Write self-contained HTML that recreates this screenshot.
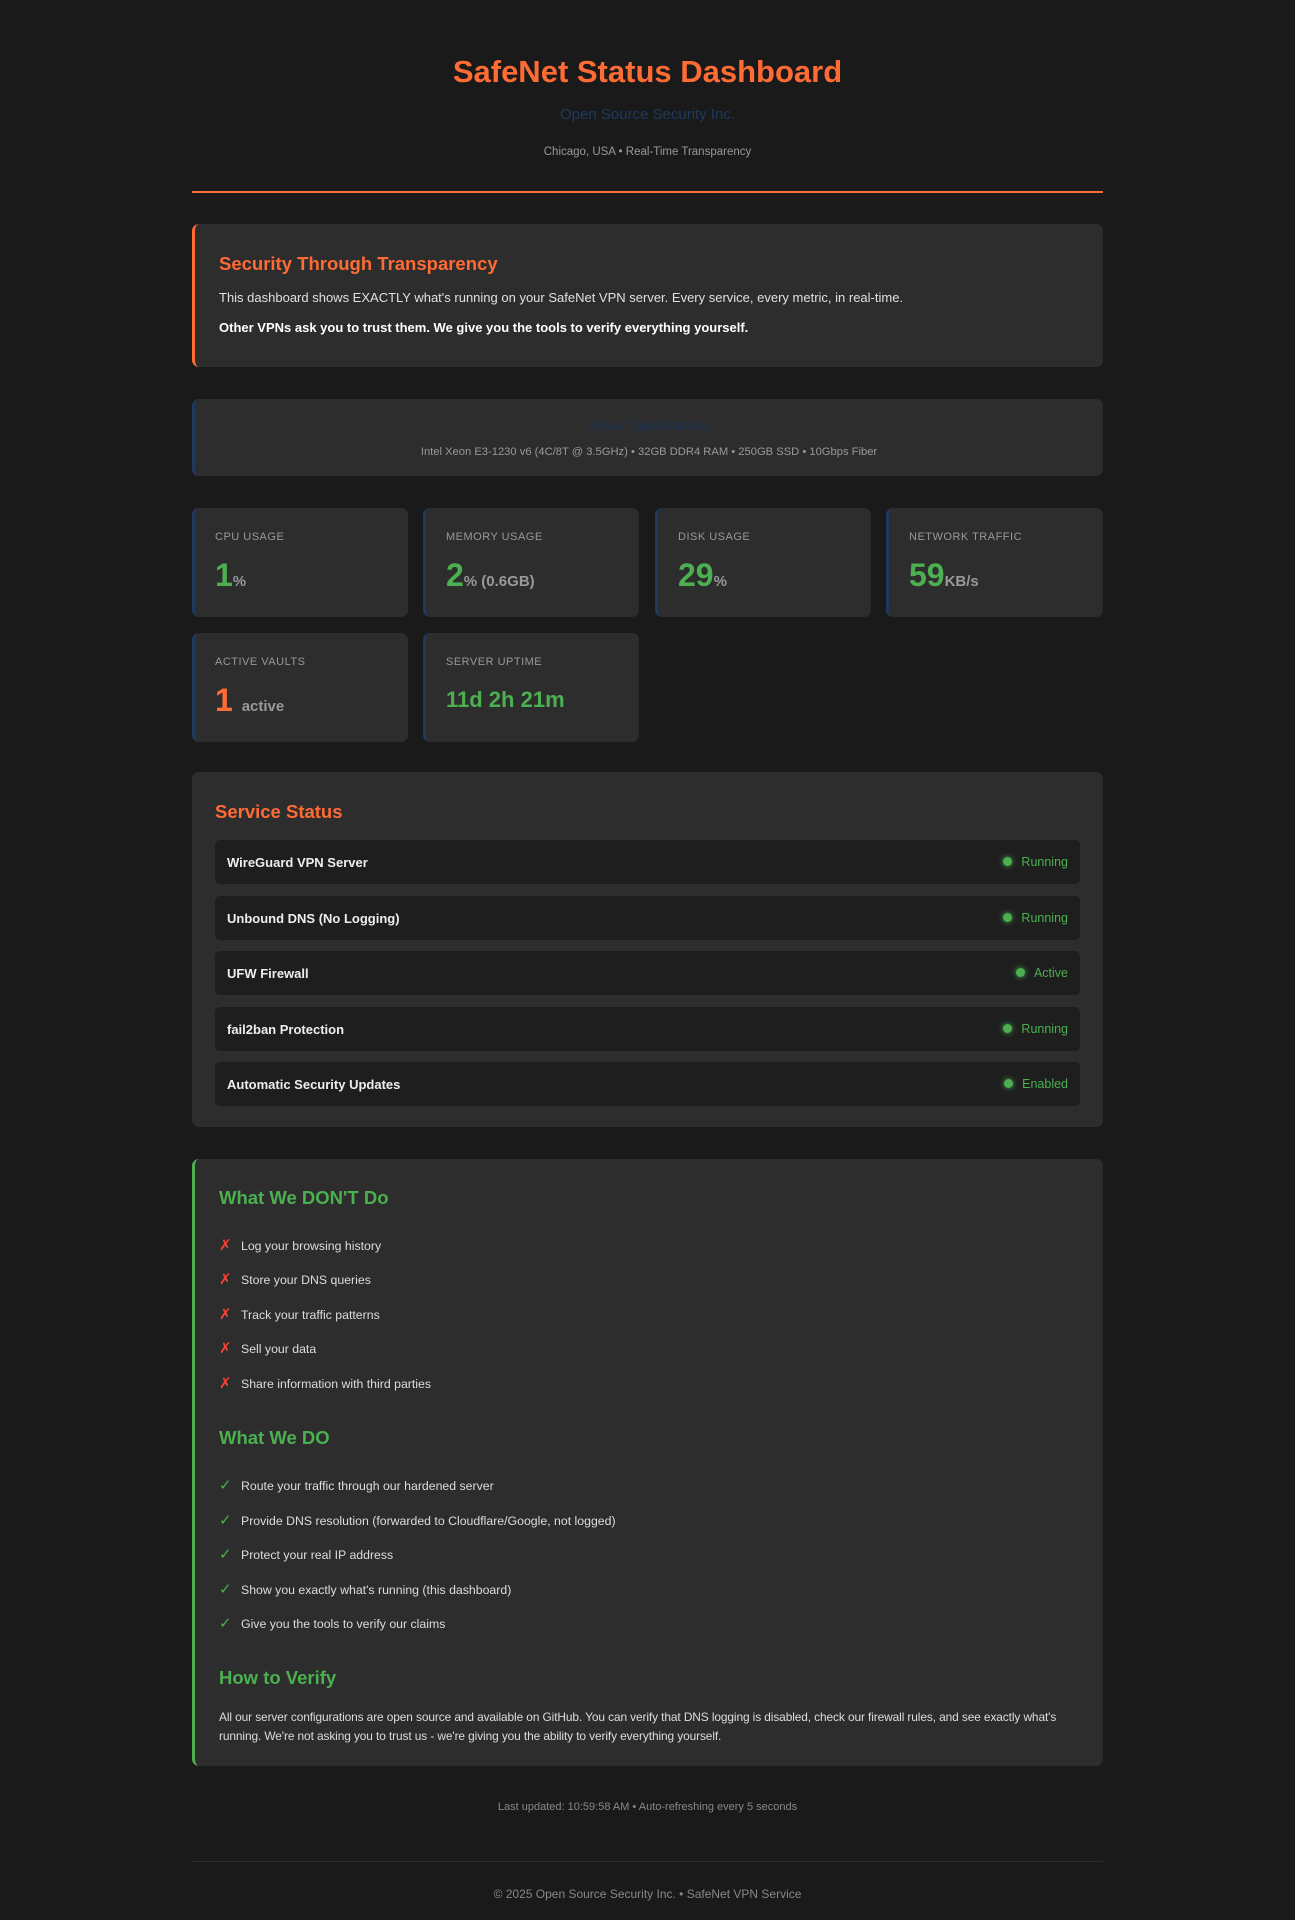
<!DOCTYPE html>
<html><head><meta charset="utf-8"><style>
*{box-sizing:border-box;margin:0;padding:0}
body{width:1295px;height:1920px;background:#1a1a1a;font-family:"Liberation Sans",sans-serif;color:#e0e0e0;position:relative;overflow:hidden}
.a{position:absolute}
.c{left:0;width:1295px;text-align:center}
.card{background:#2d2d2d;border-radius:7px}
h2{font-size:19px;color:#ff6b35;font-weight:bold}
.lbl{font-size:11.5px;color:#999;letter-spacing:.5px}
.val{font-size:32px;font-weight:bold;color:#4caf50}
.val small{font-size:15px;color:#999}
.row{position:absolute;left:23px;width:865px;height:44px;background:#1e1e1e;border-radius:5px;font-size:13px;font-weight:bold;color:#eee}
.row .n{position:absolute;left:12px;top:15px}
.row .s{position:absolute;right:12px;top:15px;color:#4caf50;font-weight:normal;font-size:12.5px}
.row .s:before{content:"";display:inline-block;width:9px;height:9px;border-radius:50%;background:#4caf50;margin-right:9px;box-shadow:0 0 6px #4caf50;vertical-align:0}
.g{font-size:19px;color:#4caf50;font-weight:bold}
.it{font-size:12.3px;color:#ddd}
.it b{display:inline-block;width:22px;font-weight:normal;font-size:15px}
</style></head><body>
<div class="a c" style="top:54px;font-size:31px;font-weight:bold;color:#ff6b35">SafeNet Status Dashboard</div>
<div class="a c" style="top:106px;font-size:15px;color:#1e3a5f">Open Source Security Inc.</div>
<div class="a c" style="top:146px;font-size:11.5px;color:#999">Chicago, USA • Real-Time Transparency</div>
<div class="a" style="left:192px;top:191px;width:911px;height:2px;background:#ff6b35"></div>

<div class="a card" style="left:192px;top:224px;width:911px;height:143px;border-left:3px solid #ff6b35">
<h2 class="a" style="left:24px;top:29px;font-size:18.5px">Security Through Transparency</h2>
<div class="a" style="left:24px;top:66px;font-size:13px;color:#e0e0e0">This dashboard shows EXACTLY what's running on your SafeNet VPN server. Every service, every metric, in real-time.</div>
<div class="a" style="left:24px;top:96px;font-size:13px;font-weight:bold;color:#fff">Other VPNs ask you to trust them. We give you the tools to verify everything yourself.</div>
</div>

<div class="a card" style="left:192px;top:399px;width:911px;height:77px;border-left:3px solid #1e3a5f">
<div class="a" style="left:0;width:908px;top:19px;text-align:center;font-size:13px;color:#1a3355">Server Specifications</div>
<div class="a" style="left:0;width:908px;top:47px;text-align:center;font-size:11.2px;color:#999">Intel Xeon E3-1230 v6 (4C/8T @ 3.5GHz) • 32GB DDR4 RAM • 250GB SSD • 10Gbps Fiber</div>
</div>

<div class="a card" style="left:192px;top:508px;width:216px;height:109px;border-left:3px solid #1e3a5f"><div class="a lbl" style="left:20px;top:23px;font-size:11px">CPU USAGE</div><div class="a val" style="left:20px;top:49px">1<small>%</small></div></div>
<div class="a card" style="left:423px;top:508px;width:216px;height:109px;border-left:3px solid #1e3a5f"><div class="a lbl" style="left:20px;top:23px;font-size:11px">MEMORY USAGE</div><div class="a val" style="left:20px;top:49px">2<small>% (0.6GB)</small></div></div>
<div class="a card" style="left:655px;top:508px;width:216px;height:109px;border-left:3px solid #1e3a5f"><div class="a lbl" style="left:20px;top:23px;font-size:11px">DISK USAGE</div><div class="a val" style="left:20px;top:49px">29<small>%</small></div></div>
<div class="a card" style="left:886px;top:508px;width:217px;height:109px;border-left:3px solid #1e3a5f"><div class="a lbl" style="left:20px;top:23px;font-size:11px">NETWORK TRAFFIC</div><div class="a val" style="left:20px;top:49px">59<small>KB/s</small></div></div>
<div class="a card" style="left:192px;top:633px;width:216px;height:109px;border-left:3px solid #1e3a5f"><div class="a lbl" style="left:20px;top:23px;font-size:11px">ACTIVE VAULTS</div><div class="a val" style="left:20px;top:49px;color:#ff6b35">1 <small>active</small></div></div>
<div class="a card" style="left:423px;top:633px;width:216px;height:109px;border-left:3px solid #1e3a5f"><div class="a lbl" style="left:20px;top:23px;font-size:11px">SERVER UPTIME</div><div class="a val" style="left:20px;font-size:22px;top:54px">11d 2h 21m</div></div>

<div class="a card" style="left:192px;top:772px;width:911px;height:355px">
<h2 class="a" style="left:23px;top:29px;font-size:18.5px">Service Status</h2>
<div class="row" style="top:68px"><span class="n">WireGuard VPN Server</span><span class="s">Running</span></div>
<div class="row" style="top:124px"><span class="n">Unbound DNS (No Logging)</span><span class="s">Running</span></div>
<div class="row" style="top:179px"><span class="n">UFW Firewall</span><span class="s">Active</span></div>
<div class="row" style="top:235px"><span class="n">fail2ban Protection</span><span class="s">Running</span></div>
<div class="row" style="top:290px"><span class="n">Automatic Security Updates</span><span class="s">Enabled</span></div>
</div>

<div class="a card" style="left:192px;top:1159px;width:911px;height:607px;border-left:3px solid #4caf50">
<div class="a g" style="left:24px;top:28px;font-size:18.5px">What We DON'T Do</div>
<div class="a it" style="left:24px;top:77px"><b style="color:#f44336">✗</b>Log your browsing history</div>
<div class="a it" style="left:24px;top:111px"><b style="color:#f44336">✗</b>Store your DNS queries</div>
<div class="a it" style="left:24px;top:146px"><b style="color:#f44336">✗</b>Track your traffic patterns</div>
<div class="a it" style="left:24px;top:180px"><b style="color:#f44336">✗</b>Sell your data</div>
<div class="a it" style="left:24px;top:215px"><b style="color:#f44336">✗</b>Share information with third parties</div>
<div class="a g" style="left:24px;top:268px;font-size:18.5px">What We DO</div>
<div class="a it" style="left:24px;top:317px"><b style="color:#4caf50">✓</b>Route your traffic through our hardened server</div>
<div class="a it" style="left:24px;top:352px"><b style="color:#4caf50">✓</b>Provide DNS resolution (forwarded to Cloudflare/Google, not logged)</div>
<div class="a it" style="left:24px;top:386px"><b style="color:#4caf50">✓</b>Protect your real IP address</div>
<div class="a it" style="left:24px;top:421px"><b style="color:#4caf50">✓</b>Show you exactly what's running (this dashboard)</div>
<div class="a it" style="left:24px;top:455px"><b style="color:#4caf50">✓</b>Give you the tools to verify our claims</div>
<div class="a g" style="left:24px;top:508px;font-size:18.5px">How to Verify</div>
<div class="a" style="left:24px;top:549px;width:870px;font-size:11.9px;line-height:19px;color:#ddd;letter-spacing:-0.1px">All our server configurations are open source and available on GitHub. You can verify that DNS logging is disabled, check our firewall rules, and see exactly what's running. We're not asking you to trust us - we're giving you the ability to verify everything yourself.</div>
</div>

<div class="a c" style="top:1801px;font-size:11px;color:#888">Last updated: 10:59:58 AM • Auto-refreshing every 5 seconds</div>
<div class="a" style="left:192px;top:1861px;width:911px;height:1px;background:#2d2d2d"></div>
<div class="a c" style="top:1887px;font-size:12px;color:#888">© 2025 Open Source Security Inc. • SafeNet VPN Service</div>
</body></html>
